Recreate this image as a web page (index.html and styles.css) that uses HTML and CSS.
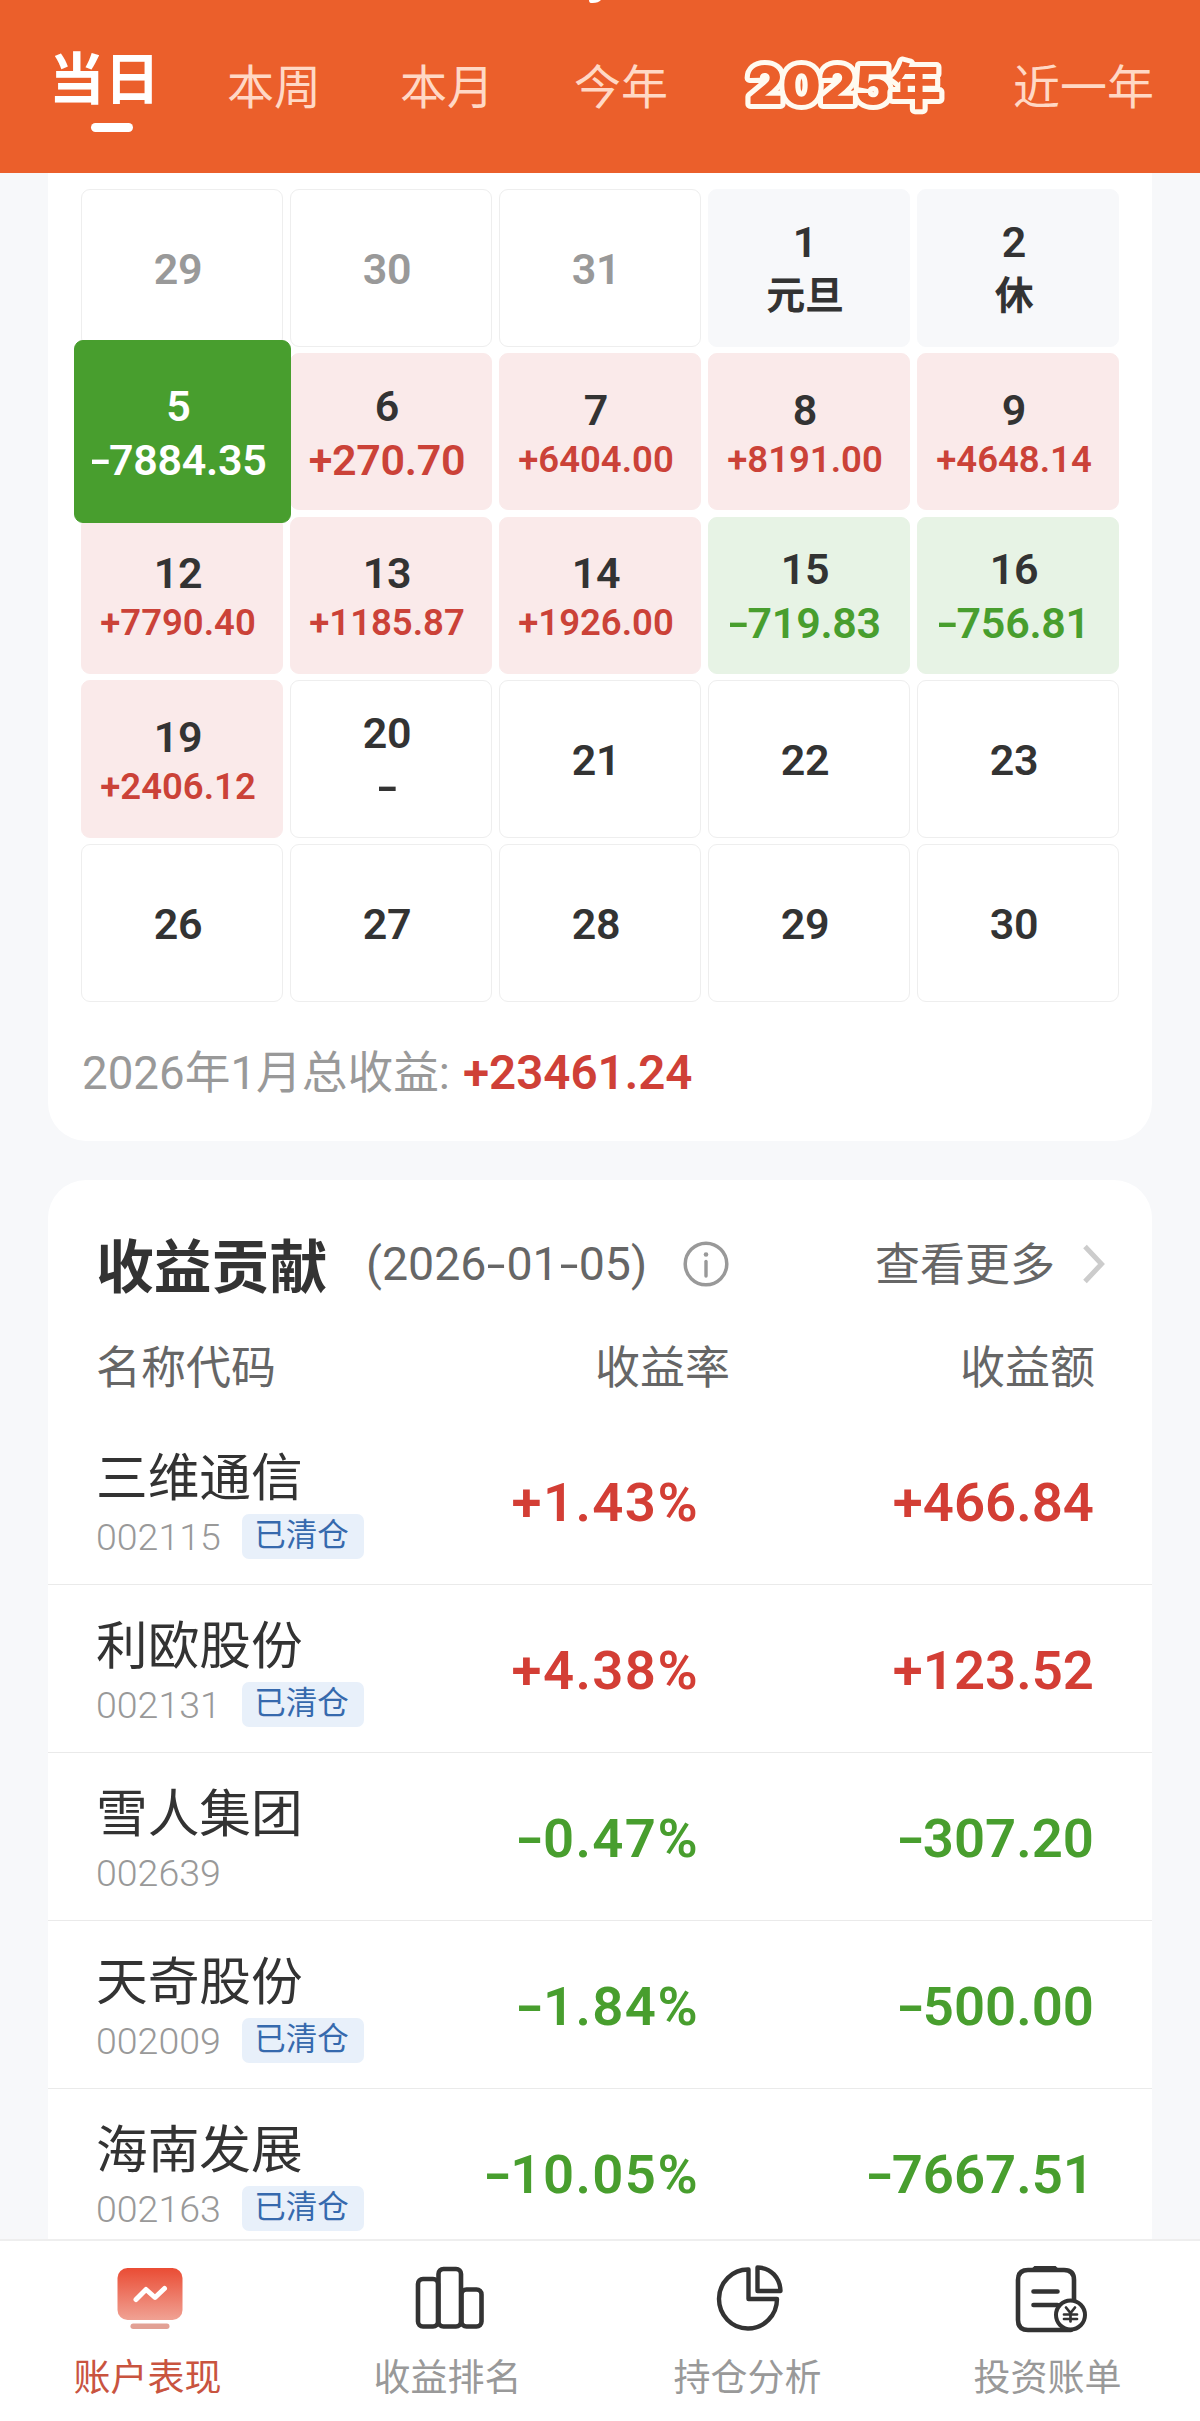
FILE: index.html
```html
<!DOCTYPE html>
<html lang="zh-CN">
<head>
<meta charset="utf-8">
<title>账户表现</title>
<link rel="stylesheet" href="styles.css">
</head>
<body>
<div class="app">
  <header class="tabs">
    <svg class="title-tail" width="14" height="4" viewBox="0 0 14 4"><path d="M1 0h12c-2 2-5 3.400-10 3-1.500 0-2-1.500-2-3z" fill="#fff"/></svg>
    <div class="tab active">当日</div>
    <div class="tab t2">本周</div>
    <div class="tab t3">本月</div>
    <div class="tab t4">今年</div>
    <svg class="year" width="206" height="66" viewBox="0 0 206 66"><text x="7" y="52" textLength="193" lengthAdjust="spacingAndGlyphs" class="year-text">2025<tspan class="year-han">年</tspan></text></svg>
    <div class="tab t6">近一年</div>
  </header>

  <main class="content">
    <section class="card calendar">
      <div class="grid">
        <div class="cell mute"><span class="day">29</span></div>
        <div class="cell mute"><span class="day">30</span></div>
        <div class="cell mute"><span class="day">31</span></div>
        <div class="cell rest"><span class="day">1</span><span class="big han">元旦</span></div>
        <div class="cell rest"><span class="day">2</span><span class="big han">休</span></div>

        <div class="cell picked"><span class="day">5</span><span class="big"><i class="dash">-</i>7884.35</span></div>
        <div class="cell up"><span class="day">6</span><span class="big">+270.70</span></div>
        <div class="cell up"><span class="day">7</span><span class="small">+6404.00</span></div>
        <div class="cell up"><span class="day">8</span><span class="small">+8191.00</span></div>
        <div class="cell up"><span class="day">9</span><span class="small">+4648.14</span></div>

        <div class="cell up"><span class="day">12</span><span class="small">+7790.40</span></div>
        <div class="cell up"><span class="day">13</span><span class="small">+1185.87</span></div>
        <div class="cell up"><span class="day">14</span><span class="small">+1926.00</span></div>
        <div class="cell down"><span class="day">15</span><span class="big"><i class="dash">-</i>719.83</span></div>
        <div class="cell down"><span class="day">16</span><span class="big"><i class="dash">-</i>756.81</span></div>

        <div class="cell up"><span class="day">19</span><span class="small">+2406.12</span></div>
        <div class="cell"><span class="day">20</span><span class="big"><i class="dash">-</i></span></div>
        <div class="cell"><span class="day">21</span></div>
        <div class="cell"><span class="day">22</span></div>
        <div class="cell"><span class="day">23</span></div>

        <div class="cell"><span class="day">26</span></div>
        <div class="cell"><span class="day">27</span></div>
        <div class="cell"><span class="day">28</span></div>
        <div class="cell"><span class="day">29</span></div>
        <div class="cell"><span class="day">30</span></div>
      </div>
      <div class="total"><span>2026年1月总收益:</span><b>+23461.24</b></div>
    </section>

    <section class="card contrib">
      <div class="head">
        <h2>收益贡献</h2>
        <span class="date">(2026<i class="dash">-</i>01<i class="dash">-</i>05)</span>
        <svg class="info" width="46" height="46" viewBox="0 0 46 46" fill="none" stroke="#999"><circle cx="23" cy="23" r="20.800" stroke-width="3.500"/><path d="M23 20.500v14.500" stroke-width="3.400" stroke-linecap="round"/><circle cx="23" cy="13.500" r="2.300" fill="#999" stroke="none"/></svg>
        <span class="more">查看更多</span>
        <svg class="chev" width="26" height="40" viewBox="0 0 26 40" fill="none" stroke="#ccc" stroke-width="5"><path d="M4 2.500 20.500 20 4 37.500"/></svg>
      </div>
      <div class="row cols"><span>名称代码</span><span>收益率</span><span>收益额</span></div>
      <div class="row item up-text">
        <div class="stock"><div class="name">三维通信</div><div class="code"><span>002115</span><em>已清仓</em></div></div>
        <div class="num rate">+1.43%</div><div class="num">+466.84</div>
      </div>
      <div class="row item up-text">
        <div class="stock"><div class="name">利欧股份</div><div class="code"><span>002131</span><em>已清仓</em></div></div>
        <div class="num rate">+4.38%</div><div class="num">+123.52</div>
      </div>
      <div class="row item down-text">
        <div class="stock"><div class="name">雪人集团</div><div class="code"><span>002639</span></div></div>
        <div class="num rate"><i class="dash">-</i>0.47%</div><div class="num"><i class="dash">-</i>307.20</div>
      </div>
      <div class="row item down-text">
        <div class="stock"><div class="name">天奇股份</div><div class="code"><span>002009</span><em>已清仓</em></div></div>
        <div class="num rate"><i class="dash">-</i>1.84%</div><div class="num"><i class="dash">-</i>500.00</div>
      </div>
      <div class="row item down-text">
        <div class="stock"><div class="name">海南发展</div><div class="code"><span>002163</span><em>已清仓</em></div></div>
        <div class="num rate"><i class="dash">-</i>10.05%</div><div class="num"><i class="dash">-</i>7667.51</div>
      </div>
    </section>
  </main>

  <nav class="nav">
    <div class="nav-item on">
      <svg width="76" height="76" viewBox="0 0 76 76"><defs><linearGradient id="warm" x1="0" y1="0" x2="0" y2="1"><stop offset="0" stop-color="#ea4c34"/><stop offset="1" stop-color="#f0a294"/></linearGradient></defs><rect x="5.500" y="7" width="65" height="52" rx="10" fill="url(#warm)"/><rect x="18.500" y="62.500" width="39" height="5.500" rx="2.700" fill="#e2a195"/><path d="M24 38.500 34 28.500 43 36.500 52.500 27.500" fill="none" stroke="#fff" stroke-width="5" stroke-linecap="round" stroke-linejoin="round"/></svg>
      <span>账户表现</span>
    </div>
    <div class="nav-item">
      <svg width="76" height="76" viewBox="0 0 76 76" fill="none" stroke="#333" stroke-width="4.600"><rect x="6" y="18" width="20" height="47.500" rx="5"/><rect x="26.500" y="8" width="22.500" height="57.500" rx="5"/><rect x="49.500" y="28.500" width="20" height="37" rx="5"/></svg>
      <span>收益排名</span>
    </div>
    <div class="nav-item">
      <svg width="76" height="76" viewBox="0 0 76 76" fill="none" stroke="#333" stroke-width="4.400" stroke-linejoin="round"><path d="M36.500 8.500A29 29.500 0 1 0 65 38H36.500z"/><path d="M45.500 6.500C59 6.500 68 17 68.500 30H45.500z"/></svg>
      <span>持仓分析</span>
    </div>
    <div class="nav-item">
      <svg width="76" height="76" viewBox="0 0 76 76" fill="none" stroke="#333" stroke-width="4.600" stroke-linecap="round"><path d="M62 40V19q0-10-10-10H16Q6 9 6 19v40q0 10 10 10h43"/><path d="M23 6.500h20l3 3H20z" fill="#333" stroke-width="3"/><path d="M21.500 30.500h24M21.500 44h24"/><circle cx="58.500" cy="54" r="14.500" fill="#fff" stroke-width="4"/><path d="M54 46.500l4.500 5.500 4.500-5.500M58.500 52v8.500M52 53.500h13M52 58h13" stroke-width="2.700"/></svg>
      <span>投资账单</span>
    </div>
  </nav>
</div>
</body>
</html>
```
FILE: styles.css
```css
* { box-sizing: border-box; }
body {
  margin: 0;
  background: #f7f8fa;
  color: #333;
  font-family: Roboto, "Noto Sans CJK SC", sans-serif;
}
.app {
  display: flex;
  flex-direction: column;
  width: 1200px;
  height: 2421px;
  overflow: hidden;
}

/* period tabs */
.tabs {
  position: relative;
  display: flex;
  flex: none;
  align-items: flex-start;
  height: 173px;
  padding-left: 49px;
  background: #eb5f2b;
  color: #ffd8c5;
}
.title-tail { position: absolute; left: 588px; top: 0; }
.tab { width: 94px; font-size: 47px; line-height: 60px; margin-top: 58px; white-space: nowrap; }
.tab.active {
  display: flex;
  flex-direction: column;
  width: 110px;
  margin-top: 45px;
  color: #fff;
  font-size: 55.500px;
  font-weight: 700;
  line-height: 72px;
}
.tab.active::after {
  content: "";
  width: 42px;
  height: 9px;
  margin: 6px 0 0 42px;
  border-radius: 5px;
  background: #fff;
}
.t2 { margin-left: 68px; }
.t3 { margin-left: 79px; }
.t4 { margin-left: 80px; }
.year { margin: 52px 0 0 73px; overflow: visible; }
.t6 { width: 142px; margin-left: 66px; }
.year-text {
  fill: #eb5f2b;
  stroke: #fffaf0;
  stroke-width: 10px;
  stroke-linejoin: round;
  paint-order: stroke;
  font-family: Inter, sans-serif;
  font-size: 52px;
  font-weight: 900;
}
.year-han { font-family: "Noto Sans CJK SC", sans-serif; font-size: 49px; }

/* cards */
.content { flex: 1; min-height: 0; overflow: hidden; padding: 0 48px; }
.card { background: #fff; }
.dash { display: inline-block; width: .43em; text-align: center; font-style: normal; transform: scaleX(1.45); }

.calendar { height: 968px; padding: 16px 33px 0; border-radius: 0 0 38px 38px; }
.grid {
  display: grid;
  grid-template-columns: repeat(5, 202px);
  grid-auto-rows: 157.500px;
  gap: 6.300px 7px;
}
.cell {
  display: flex;
  flex-direction: column;
  align-items: center;
  justify-content: center;
  padding: 2px 8px 0 0;
  border: 1px solid #eee;
  border-radius: 9px;
  font-size: 43px;
  font-weight: 600;
  line-height: 54px;
  letter-spacing: -.3px;
  white-space: nowrap;
}
.small { font-size: 36.500px; line-height: 46px; letter-spacing: 0; }
.small, .cell.up .big { color: #cb4238; }
.han { font-size: 39px; font-weight: 700; }
.mute { color: #999; }
.rest { background: #f7f8fa; border-color: #f7f8fa; }
.up { background: #faeaea; border-color: #faeaea; }
.down { background: #e7f3e5; border-color: #e7f3e5; }
.down .big { color: #489e2e; }
.picked {
  z-index: 1;
  margin: -13px -8px -13px -7px;
  background: #489e2e;
  border-color: #489e2e;
  color: #fff;
}
.total {
  display: flex;
  gap: 13px;
  align-items: center;
  height: 60px;
  margin-top: 41px;
  padding-left: 1px;
  color: #999;
  font-size: 45.700px;
  white-space: nowrap;
}
.total span { margin-top: -7px; }
.total b { color: #cf4037; font-size: 47.500px; font-weight: 600; }

.contrib { height: 1300px; margin-top: 39px; padding-top: 49px; border-radius: 38px 38px 0 0; }
.head { display: flex; align-items: center; height: 72px; padding: 0 45px 2px 48px; white-space: nowrap; }
.head h2 { margin: 7px 0 0; width: 270px; font-size: 57.800px; font-weight: 700; line-height: 72px; }
.date { width: 317px; color: #666; font-size: 46.500px; }
.more { margin: -6px 0 0 auto; color: #666; font-size: 45px; }
.chev { margin-left: 26px; }

.row {
  display: grid;
  grid-template-columns: 1fr 260px 397px;
  padding: 0 58px 0 49px;
}
.row > :nth-child(n+2) { text-align: right; }
.cols { height: 116px; padding: 38px 57px 0 48px; color: #666; font-size: 45px; line-height: 60px; }
.cols span:nth-child(2) { margin-right: -32px; }
.item { height: 168px; border-bottom: 1px solid #eaeaea; white-space: nowrap; }
.name { margin-top: 32px; font-size: 51.700px; line-height: 60px; }
.stock { margin-left: -1px; }
.code { display: flex; gap: 21px; align-items: flex-start; height: 45px; margin-top: 5px; color: #999; font-size: 37.500px; line-height: 47px; }
.code span { width: 125px; font-weight: 350; }
.code em {
  width: 122px;
  height: 45px;
  padding-right: 3px;
  border-radius: 7px;
  background: #e8f0fa;
  color: #3669ad;
  font-size: 31.500px;
  font-style: normal;
  line-height: 43px;
  text-align: center;
}
.num { padding-top: 49px; font-size: 54.500px; font-weight: 600; line-height: 72px; }
.rate { margin-right: -2px; letter-spacing: 1.4px; }
.up-text .num { color: #d33e35; }
.down-text .num { color: #489e2e; }

/* bottom navigation */
.nav {
  display: grid;
  flex: none;
  grid-template-columns: repeat(4, 1fr);
  height: 182px;
  border-top: 2px solid #eee;
  background: #fff;
}
.nav-item { display: flex; flex-direction: column; align-items: center; padding-top: 20px; color: #999; }
.nav-item span { margin: 17px 5px 0 0; font-size: 37px; line-height: 50px; }
.nav-item.on span { color: #c9543f; }
```
